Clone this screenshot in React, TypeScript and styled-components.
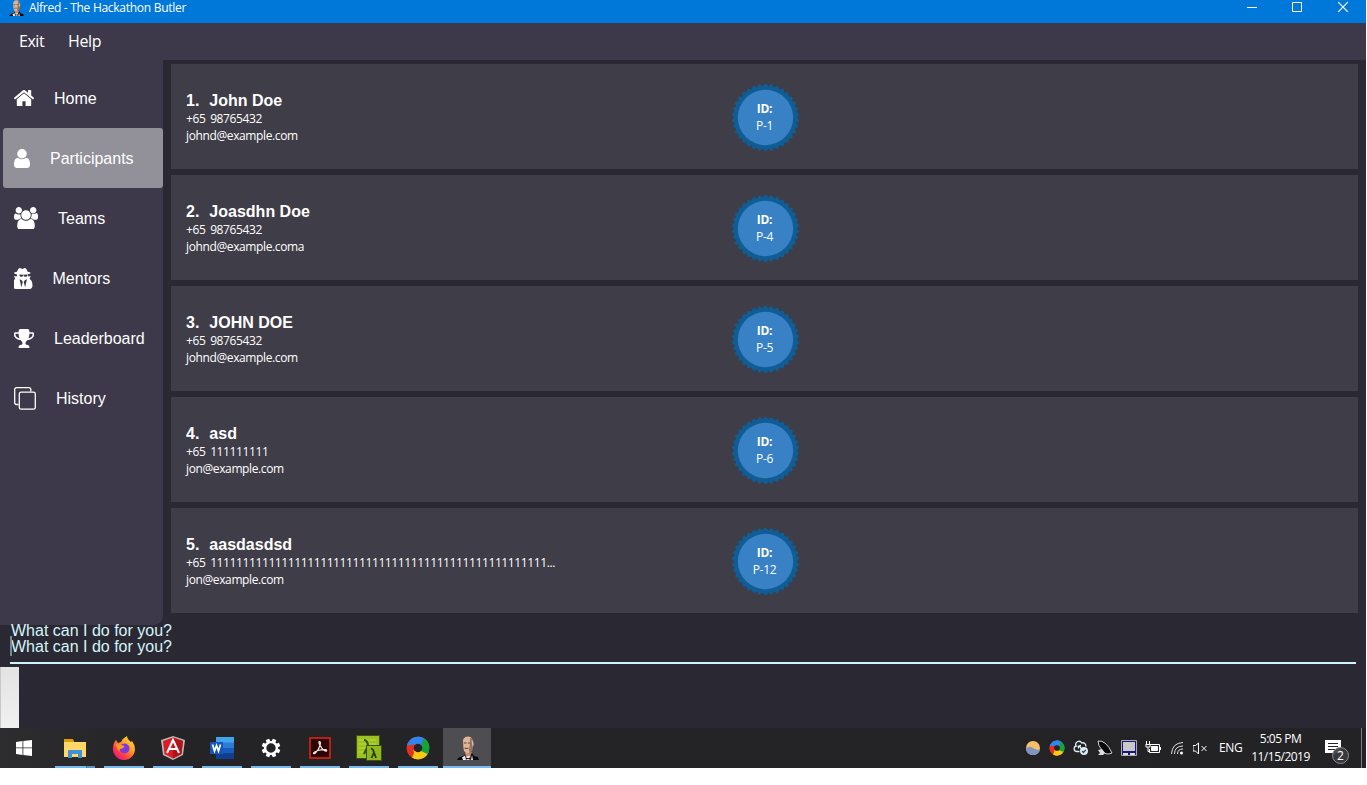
import React from 'react';
import styled, { createGlobalStyle } from 'styled-components';

const ui = "'Open Sans', 'Noto Sans', sans-serif";
const arial = "'Liberation Sans', Arial, sans-serif";

const Global = createGlobalStyle`
  html, body { margin: 0; padding: 0; background: #fff; overflow: hidden; }
  * { box-sizing: border-box; }
  svg { display: block; flex: none; }
`;
const Screen = styled.div`
  width: 1366px; height: 768px; display: flex; flex-direction: column;
  background: #2a2833; overflow: hidden; font-family: ${ui}; color: #fff;
`;
const TitleBar = styled.header`
  height: 23px; flex: none; background: #0078d9; display: flex; align-items: flex-start;
  padding-left: 9px;
`;
const Title = styled.div`
  margin-left: 5px; font-size: 12px; line-height: 16px; letter-spacing: -0.28px; flex: 1; white-space: nowrap;
`;
const Controls = styled.div`display: flex; width: 120px; height: 16px;`;
const MenuBar = styled.nav`
  height: 37px; flex: none; background: #3d394a; display: flex; padding-left: 19px; gap: 24px;
  font-size: 16px; line-height: 37px;
`;
const MenuItem = styled.span<{ $w: number; $s: number }>`
  width: ${p => p.$w}px; letter-spacing: ${p => p.$s}px; white-space: nowrap;
`;
const Main = styled.div`display: flex; height: 565px; flex: none;`;
const Sidebar = styled.aside`
  width: 163px; height: 565px; background: #3d394a; border-bottom-right-radius: 9px; padding: 8px 0 0 3px;
`;
const NavItem = styled.div<{ $active?: boolean }>`
  height: 60px; display: flex; align-items: center; padding-left: 11px; gap: 20px; border-radius: 3px;
  background: ${p => (p.$active ? '#929098' : 'transparent')};
  font-family: ${arial}; font-size: 16px; white-space: nowrap;
`;
const NavLabel = styled.span`padding-top: 2px;`;
const Cards = styled.main`padding: 4px 8px 0; width: 1203px; display: flex; flex-direction: column; gap: 6px;`;
const Card = styled.article`
  height: 105px; background: #3f3d47; display: grid; grid-template-columns: 545px 69px; align-items: center; padding-left: 15px;
  flex: none;
`;
const Info = styled.div`display: flex; flex-direction: column; padding-top: 3px;`;
const Name = styled.div`
  font: bold 16px/18px ${arial}; display: flex; gap: 10px;
`;
const Detail = styled.div<{ $s: number }>`
  font-size: 12px; line-height: 17px; letter-spacing: ${p => p.$s}px; word-spacing: 2px; white-space: nowrap;
`;
const Badge = styled.div`display: grid; width: 69px; height: 71px; padding-top: 2px; > * { grid-area: 1 / 1; }`;
const BadgeText = styled.div`
  align-self: center; text-align: center; font-size: 12px; line-height: 17px; letter-spacing: -0.3px; z-index: 1;
  padding: 0 2px 2px 0;
`;
const Console = styled.section`
  height: 39px; flex: none; margin: 0 10px; border-bottom: 2px solid #d2f3fb; color: #d4f5fa;
  font: 16px/16px ${arial};
`;
const Prompt = styled.div<{ $caret?: boolean }>`
  height: 16px; padding-left: 1px; position: relative; top: -2px; white-space: nowrap;
  &::before {
    content: ''; display: ${p => (p.$caret ? 'block' : 'none')};
    position: absolute; left: 0; top: -3px; width: 2px; height: 20px; background: #75898f;
  }
`;
const Result = styled.div`height: 64px; flex: none; padding-top: 3px;`;
const Thumb = styled.div`
  width: 19px; height: 61px; background: linear-gradient(#e3e3e3, #f0f0f0); border-left: 1px solid #c8c8c8;
`;
const Taskbar = styled.footer`
  height: 40px; flex: none; display: flex; background: linear-gradient(90deg, #2d2d2f, #242427 12%, #232326);
`;
const Start = styled.div`width: 48px; display: grid; place-items: center;`;
const TaskButton = styled.div<{ $active?: boolean; $group?: boolean }>`
  width: ${p => (p.$active ? 48 : 49)}px; height: 40px; display: grid; place-items: center; position: relative;
  padding-left: ${p => (p.$active ? 2 : 5)}px;
  margin-left: ${p => (p.$active ? 3 : 0)}px;
  background: ${p => (p.$active ? '#4e4d52' : 'transparent')};
  &::after {
    content: ''; position: absolute; bottom: 0; height: 2px;
    background: ${p => (p.$group ? 'linear-gradient(90deg, #76b9ed 31px, #4a7ca3 31px 32px, #5c94c0 32px)' : '#76b9ed')};
    left: ${p => (p.$active ? 0 : 7)}px; width: ${p => (p.$active ? 48 : 40)}px;
  }
`;
const Apps = styled.div`display: flex; flex: 1;`;
const Tray = styled.div`display: flex; align-items: center; gap: 8px; width: 194px;`;
const Lang = styled.div`font-size: 12px; letter-spacing: -0.4px; line-height: 40px; width: 32px;`;
const Clock = styled.div`
  width: 59px; text-align: center; font-size: 12px; line-height: 18px; padding-top: 2px; letter-spacing: -0.5px; white-space: nowrap;
`;
const Notice = styled.div`width: 51px; padding: 10px 0 0 13px;`;
const Edge = styled.div`width: 5px; border-left: 1px solid #7b7b7d;`;

const Face = ({ w, h }: { w: number; h: number }) => (
  <svg width={w} height={h} viewBox="0 0 22 24">
    <path d="M0 24l1-2 5-2 3-3h6l2 3 4 1 1 3z" fill="#0b0b0d" />
    <path d="M8 17l1 4h4l2-5z" fill="#c98f70" />
    <path d="M6 4q1-3.500 5-3.500 3 0 4 2l1 5-1 6-3 3.500H9l-2-2-.7-4z" fill="#deb397" />
    <path d="M13 2q4 .5 3.500 6l-1 6-2.500 4-1-4 1-6z" fill="#96715c" />
    <path d="M14.500 4q2 1 2 5l-1 2z" fill="#c9c5c3" />
    <path d="M7 7h2.500M11 7h2M7.500 12.300h4" stroke="#57423a" />
    <path d="M9 24v-3l3-1 2 1v3z" fill="#f5f5f5" />
    <path d="M8 21l3 1.200 3-1.200v3l-3-1-3 1z" fill="#111" />
    <path d="M5 21.500l3-2 1 4.500H6zM15 19l1 5h-2z" fill="#e9e9ea" />
  </svg>
);

const navs = [
  { label: 'Home', w: 20, h: 16, box: '96 253 1600 1283', d: 'M1472 992v480q0 26-19 45t-45 19h-384v-384h-256v384h-384q-26 0-45-19t-19-45v-480q0-1 .5-3t.5-3l575-474 575 474q1 2 1 6zm223-69l-62 74q-8 9-21 11h-3q-13 0-21-7l-692-577-692 577q-12 8-24 7-13-2-21-11l-62-74q-8-10-7-23.5t11-21.5l719-599q32-26 76-26t76 26l244 204v-195q0-14 9-23t23-9h192q14 0 23 9t9 23v408l219 182q10 8 11 21.5t-7 23.5z' },
  { label: 'Participants', w: 16, h: 19, box: '256 128 1280 1536', d: 'M1536 1399q0 109-62.5 187t-150.5 78h-854q-88 0-150.5-78t-62.5-187q0-85 8.5-160.5t31.5-152 58.5-131 94-89 134.5-34.5q131 128 313 128t313-128q76 0 134.5 34.5t94 89 58.5 131 31.5 152 8.5 160.5zm-256-887q0 159-112.5 271.5t-271.5 112.5-271.5-112.5-112.5-271.5 112.5-271.5 271.5-112.5 271.5 112.5 112.5 271.5z' },
  { label: 'Teams', w: 24, h: 22.5, box: '64 0 1920 1792', d: 'M657 896q-162 5-265 128h-134q-82 0-138-40.5t-56-118.5q0-353 124-353 6 0 43.5 21t97.5 42.5 119 21.5q67 0 133-23-5 37-5 66 0 159 91 294zm1071 637q0 120-73 189.5t-194 69.5h-874q-121 0-194-69.5t-73-189.5q0-53 3.5-103.5t14-109 26.5-108.5 43-97.5 62-81 85.5-53.5 111.5-20q10 0 43 21.5t73 48 107 48 135 21.5 135-21.5 107-48 73-48 43-21.5q61 0 111.5 20t85.5 53.5 62 81 43 97.5 26.5 108.5 14 109 3.5 103.5zm-1024-1277q0 106-75 181t-181 75-181-75-75-181 75-181 181-75 181 75 75 181zm704 384q0 159-112.5 271.5t-271.5 112.5-271.5-112.5-112.5-271.5 112.5-271.5 271.5-112.5 271.5 112.5 112.5 271.5zm576 225q0 78-56 118.5t-138 40.5h-134q-103-123-265-128 91-135 91-294 0-29-5-66 66 23 133 23 59 0 119-21.5t97.5-42.5 43.5-21q124 0 124 353zm-128-609q0 106-75 181t-181 75-181-75-75-181 75-181 181-75 181 75 75 181z' },
  { label: 'Mentors', w: 18.5, h: 21, box: '256 0 1280 1672', d: 'M768 1536l96-448-96-128-128-64zm256 0l128-640-128 64-96 128zm168-1002q-2-4-4-6-10-8-96-8-70 0-167 19-7 2-21 2t-21-2q-97-19-167-19-86 0-96 8-2 2-4 6 2 18 4 27 2 3 7.5 6.5t7.5 10.5q2 4 7.5 20.5t7 20.5 7.5 17 8.5 17 9 14 12 13.5 14 9.5 17.5 8 20.5 4 24.5 2q36 0 59-12.5t32.5-30 14.5-34.5 11.5-29.5 17.5-12.5h12q11 0 17.5 12.5t11.5 29.5 14.5 34.5 32.5 30 59 12.5q13 0 24.5-2t20.5-4 17.5-8 14-9.5 12-13.5 9-14 8.5-17 7.5-17 7-20.5 7.5-20.5q2-7 7.5-10.5t7.5-6.5q2-9 4-27zm344 879q0 121-73 190t-194 69h-874q-121 0-194-69t-73-190q0-61 4.5-118t19-125.5 37.5-123.5 63.5-103.5 93.5-74.5l-90-220h214q-22-64-22-128 0-12 2-32-194-40-194-96 0-57 210-99 17-62 51.5-134t70.5-114q32-37 76-37 30 0 84 31t84 31 84-31 84-31q44 0 76 37 36 42 70.5 114t51.5 134q210 42 210 99 0 56-194 96 7 81-20 160h214l-82 225q63 33 107.5 96.5t65.5 143.5 29 151.5 8 157.5z' },
  { label: 'Leaderboard', w: 20, h: 19, box: '64 128 1664 1536', d: 'M522 883q-74-162-74-371h-256v96q0 78 94.5 162t235.5 113zm1078-275v-96h-256q0 209-74 371 141-29 235.5-113t94.5-162zm128-128v128q0 71-41.5 143t-112 130-173 97.5-215.5 44.5q-42 54-95 95-38 34-52.5 72.5t-14.5 89.5q0 54 30.5 91t97.5 37q75 0 133.5 45.5t58.5 114.5v64q0 14-9 23t-23 9h-832q-14 0-23-9t-9-23v-64q0-69 58.5-114.5t133.5-45.5q67 0 97.5-37t30.5-91q0-51-14.5-89.5t-52.5-72.5q-53-41-95-95-113-5-215.5-44.5t-173-97.5-112-130-41.5-143v-128q0-40 28-68t68-28h288v-96q0-66 47-113t113-47h576q66 0 113 47t47 113v96h288q40 0 68 28t28 68z' },
  { label: 'History', w: 22, h: 23, box: '0 0 22 23', d: '' },
];

const people = [
  { name: 'John Doe', phone: '+65 98765432', mail: 'johnd@example.com', id: 'P-1' },
  { name: 'Joasdhn Doe', phone: '+65 98765432', mail: 'johnd@example.coma', id: 'P-4' },
  { name: 'JOHN DOE', phone: '+65 98765432', mail: 'johnd@example.com', id: 'P-5' },
  { name: 'asd', phone: '+65 111111111', mail: 'jon@example.com', id: 'P-6' },
  { name: 'aasdasdsd', phone: '+65 ' + '1'.repeat(52) + '...', mail: 'jon@example.com', id: 'P-12' },
];

const teeth = Array.from({ length: 68 }, (_, i) => {
  const a = (i / 68) * Math.PI * 2;
  const r = i % 2 ? 31.3 : 34.2;
  return `${(34.5 + r * Math.sin(a)).toFixed(2)},${(34.5 - r * Math.cos(a)).toFixed(2)}`;
}).join(' ');

const Gear = () => (
  <svg width="20" height="20" viewBox="-10 -10 20 20">
    {[0, 45, 90, 135, 180, 225, 270, 315].map(a => <path key={a} d="M-1.800-9.300h3.600l.3 3h-4.200z" transform={`rotate(${a + 22.5})`} fill="#fff" />)}
    <circle r="5.900" fill="none" stroke="#fff" strokeWidth="2.400" />
  </svg>
);
/* Four swirling petals: each quarter of the ring sweeps in towards the hole. */
const Ring = ({ s }: { s: number }) => (
  <svg width={s} height={s} viewBox="-12 -12 24 24">
    <circle r="11.300" fill="#e5301f" />
    {['#2f86ee', '#12a53a', '#f9cc12', '#e5301f'].map((c, i) => (
      <path key={c} d="M-10.500 -4A11.300 11.300 0 0 1 6 -9.500Q1 -9 5 -2Q-4 -8 -10.500 -4z" transform={`rotate(${i * 90})`} fill={c} />
    ))}
    <path d="M5.500 -9.900A11.300 11.300 0 0 1 11.300 0Q11 5 8 8L3 3 4 -3z" fill="#12a53a" />
    <path d="M9.500 6A11.300 11.300 0 0 1 -6 9.600L-3 3 3 3z" fill="#f9cc12" />
    <path d="M-11 -2.500A11.300 11.300 0 0 1 6 -9.500L3 -3 -4 -3.500z" fill="#2f86ee" />
    <circle r="4.300" fill="#242427" />
  </svg>
);
const icons = [
  <svg width="22" height="19" viewBox="0 0 22 19"><path d="M0 1h9l1 2h12v15H0z" fill="#ffd868" /><path d="M0 0h9l1 3H0z" fill="#e19c09" /><path d="M4 12q0-1 1-1h12q1 0 1 1v7h-4v-4H8v4H4z" fill="#3c93dc" /></svg>,
  <svg width="24" height="24" viewBox="0 0 24 24">
    <defs><linearGradient id="fx" x1="1" y1="0" x2=".2" y2="1"><stop offset="0" stopColor="#fff34f" /><stop offset=".45" stopColor="#ff9a22" /><stop offset=".75" stopColor="#ff3b47" /><stop offset="1" stopColor="#e3168b" /></linearGradient></defs>
    <path d="M4 4l2 3 3-1q2-4 6-6 0 3 4 6l1-1q3 4 3 8A11 11 0 0 1 1 13Q1 7 4 4z" fill="url(#fx)" />
    <circle cx="12.500" cy="12.500" r="5" fill="#7a3ae0" /><path d="M3.500 8l4 .5 5 1.500q-1 3-5 3 0 2 1 3-4-3-5-8z" fill="#ff9a28" />
  </svg>,
  <svg width="24" height="24" viewBox="0 0 24 24"><path d="M12 0l12 4-2 15-10 5-10-5L0 4z" fill="#b9b9b9" /><path d="M12 1.500l10 3.500-1.500 13L12 22.500 3.500 18 2 5z" fill="#dc1c22" /><path d="M12 1.500l10 3.500-1.500 13L12 22.500z" fill="#b01319" /><path d="M6 17l6-13 6 13M8.500 13h7" fill="none" stroke="#fff" strokeWidth="2" /></svg>,
  <svg width="24" height="22" viewBox="0 0 24 22"><path d="M6 0h18v6H6z" fill="#41a5ee" /><path d="M6 5.500h18V11H6z" fill="#2b7cd3" /><path d="M6 11h18v5.500H6z" fill="#185abd" /><path d="M6 16.500h18V22H6z" fill="#103f91" /><path d="M0 5h13v12H0z" fill="#1656b8" /><path d="M2.500 7.500L4.500 14l2-5.500 2 5.500 2-6.500" fill="none" stroke="#fff" strokeWidth="1.700" /></svg>,
  <Gear />,
  <svg width="22" height="22" viewBox="0 0 22 22"><path d="M1 1h20v20H1z" fill="#2c0404" stroke="#e2231a" strokeWidth="1.500" /><path d="M10.300 4.500q1.700 0 .8 3.500-1 4-4.500 7.800-1.800 1.500-2.100.6-.3-1.200 4.500-2.900 4-1.300 7.500-.8 1.700.5 1 1.300-1.500.8-4.300-2.300-2.700-3-3.300-6 0-1.200.4-1.200z" fill="none" stroke="#f4e9e9" strokeWidth="1.200" /></svg>,
  <svg width="26" height="26" viewBox="0 0 26 26"><path d="M.5.500h23v23H.5z" fill="#9bc31c" stroke="#3e501a" /><path d="M3 5h17M3 9h17M3 13h17M3 17h8" stroke="#b8d84c" /><path d="M8 5q3 0 4 5l2 7M12 11l-4 8" fill="none" stroke="#3e501a" strokeWidth="2.200" /><path d="M10.500 10.500h15v15h-15z" fill="#8fb81a" stroke="#3e501a" /><path d="M15 13.500q2 0 3 4l2 5.500M18 17.500L15.500 23" fill="none" stroke="#26320c" strokeWidth="1.700" /></svg>,
  <Ring s={24} />,
];

export default function App() {
  return (
    <>
      <Global />
      <Screen>
        <TitleBar>
          <Face w={15} h={16} />
          <Title>Alfred - The Hackathon Butler</Title>
          <Controls>
            <svg width="120" height="16" viewBox="0 0 120 16" fill="none" stroke="#fff">
              <path d="M1 7.500h10M46.500 2.500h9v9h-9z" /><path d="M92.200 2.200l9.600 9.600M101.800 2.200l-9.600 9.600" strokeWidth="1.200" />
            </svg>
          </Controls>
        </TitleBar>
        <MenuBar><MenuItem $w={25} $s={-0.45}>Exit</MenuItem><MenuItem $w={34} $s={-0.35}>Help</MenuItem></MenuBar>
        <Main>
          <Sidebar>
            {navs.map(n => (
              <NavItem key={n.label} $active={n.label === 'Participants'}>
                <svg width={n.w} height={n.h} viewBox={n.box} preserveAspectRatio="none">
                  {n.d ? <path d={n.d} fill="#fff" /> : (
                    <g fill="none" stroke="#fff" strokeWidth="1.300">
                      <path d="M4.500 17.500h-2a1.800 1.800 0 0 1-1.800-1.800V2.500A1.800 1.800 0 0 1 2.500.700h12.500a1.800 1.800 0 0 1 1.800 1.800v2" />
                      <rect x="5.300" y="5.200" width="16" height="17" rx="1.800" />
                    </g>
                  )}
                </svg>
                <NavLabel>{n.label}</NavLabel>
              </NavItem>
            ))}
          </Sidebar>
          <Cards>
            {people.map((p, i) => (
              <Card key={i}>
                <Info>
                  <Name><span>{i + 1}.</span><span>{p.name}</span></Name>
                  <Detail $s={-0.39}>{p.phone}</Detail>
                  <Detail $s={-0.38}>{p.mail}</Detail>
                </Info>
                <Badge>
                  <svg width="69" height="69" viewBox="0 0 69 69"><polygon points={teeth} fill="#0f5d94" /><circle cx="34.500" cy="34.500" r="27.700" fill="#3781c4" /></svg>
                  <BadgeText><b>ID:</b><br />{p.id}</BadgeText>
                </Badge>
              </Card>
            ))}
          </Cards>
        </Main>
        <Console><Prompt>What can I do for you?</Prompt><Prompt $caret>What can I do for you?</Prompt></Console>
        <Result><Thumb /></Result>
        <Taskbar>
          <Start><svg width="16" height="16" viewBox="0 0 16 16" fill="#fff"><path d="M0 2l6.500-1v6.500H0zM7.300.900L16 0v7.500H7.300zM0 8.300h6.500V15L0 14zM7.300 8.300H16V16l-8.700-1z" /></svg></Start>
          <Apps>
            {icons.map((ic, i) => <TaskButton key={i} $group={i === 0}>{ic}</TaskButton>)}
            <TaskButton $active><Face w={22} h={24} /></TaskButton>
          </Apps>
          <Tray>
            <svg width="16" height="16" viewBox="0 0 16 16"><circle cx="8" cy="8" r="7" fill="#f5c06a" /><path d="M1 9q3-4 7-1 4 3 7 1-1 6-7 6-6 0-7-6z" fill="#7e95c2" /></svg>
            <Ring s={16} />
            <svg width="16" height="16" viewBox="0 0 16 16" fill="none" stroke="#dfeef5" strokeWidth="1.300"><path d="M6.500 11.500H4a2.800 2.800 0 0 1-.8-5.500 3 3 0 0 1 5.500-3 3 3 0 0 1 4 3.500M4.500 6.500a2.500 2.500 0 0 1 3.500 2.500M8 5.500a2.500 2.500 0 0 0-2.500 3" /><circle cx="11" cy="11" r="3.300" fill="#dfeef5" /><path d="M9.200 11l1.300 1.500 2.300-2.700" stroke="#28485c" /></svg>
            <svg width="16" height="16" viewBox="0 0 16 16"><path d="M1 1q8-1 14 12-7 3-10-3Q1 6 1 1z" fill="#080808" stroke="#d0d0d0" /><path d="M1 10l4-1 3 4-2 2H1l2-2z" fill="#ddd" /></svg>
            <svg width="16" height="16" viewBox="0 0 16 16"><path d="M.5.500h15v15H.500z" fill="#17177c" stroke="#aaa" /><path d="M2 2h12v9H2z" fill="#c9c9c9" /><path d="M2 13h5v2H2zM9 13h5v2H9z" fill="#ddd" /></svg>
            <svg width="16" height="16" viewBox="0 0 16 16" fill="none" stroke="#fff"><path d="M5 4.500h9.500v8h-10V9M15.500 7v3M1.500 1v3M4.500 1v3M.5 4.500h5M1 5v2h4V5M3 7v4.500h2" /><path d="M6.500 6.500h6v4h-6z" fill="#fff" /></svg>
            <svg width="16" height="16" viewBox="0 0 16 16" fill="none" stroke="#ddd"><path d="M2.500 14Q3 3 14 2.500M5.500 14q0-8 8.500-8M8.500 14q0-5 5.500-5" /><circle cx="12.500" cy="13" r="1.500" fill="#fff" stroke="none" /></svg>
            <svg width="16" height="16" viewBox="0 0 16 16" fill="none" stroke="#fff"><path d="M0 5.500h2.500L5.500 3v11l-3-3H0zM8.500 6l5 5M13.500 6l-5 5" /></svg>
          </Tray>
          <Lang>ENG</Lang>
          <Clock>5:05 PM<br />11/15/2019</Clock>
          <Notice>
            <svg width="26" height="26" viewBox="0 0 26 26"><path d="M2 2h16v13h-5l-3 3v-3H2z" fill="#fff" /><path d="M5 5.500h10M5 8.500h10M5 11.500h7" stroke="#242427" /><circle cx="17.500" cy="17.500" r="8" fill="#3c3c3e" fillOpacity=".92" stroke="#8c8c8e" /><text x="17.500" y="22" fill="#fff" fontSize="12" textAnchor="middle" fontFamily="Open Sans">2</text></svg>
          </Notice>
          <Edge />
        </Taskbar>
      </Screen>
    </>
  );
}
